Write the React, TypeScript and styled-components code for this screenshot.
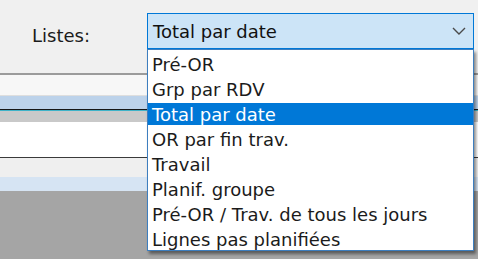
import styled, { createGlobalStyle } from "styled-components"

const GlobalStyle = createGlobalStyle`
  html, body {
    margin: 0;
    padding: 0;
    background: #f0f0f0;
  }
  body {
    font-family: "DejaVu Sans", Tahoma, sans-serif;
  }
`

const Screen = styled.div`
  position: relative;
  width: 478px;
  height: 259px;
  overflow: hidden;
  display: flex;
  flex-direction: column;
  background: #a5a5a5;
`

const Header = styled.div`
  flex: none;
  height: 73px;
  box-sizing: border-box;
  display: flex;
  align-items: flex-start;
  padding: 13px 0 0 32px;
  background: #f0f0f0;
`

const Label = styled.span`
  width: 115px;
  padding-top: 12px;
  font-size: 18px;
  line-height: 21px;
  color: #1b1b1b;
`

const Combo = styled.div`
  width: 327px;
  height: 36px;
  box-sizing: border-box;
  display: flex;
  align-items: center;
  justify-content: space-between;
  padding: 0 7px 0 5px;
  border: 1px solid #0078d7;
  background: #cce4f7;
  font-size: 18px;
  line-height: 21px;
  color: #111;
`

const Stripe = styled.div<{ $h: number; $bg: string }>`
  flex: none;
  height: ${p => p.$h}px;
  background: ${p => p.$bg};
`

const Rest = styled.div`
  flex: 1;
  background: #a5a5a5;
`

const DropList = styled.ul`
  position: absolute;
  top: 49px;
  left: 147px;
  width: 327px;
  box-sizing: border-box;
  margin: 0;
  padding: 3px 0 0;
  list-style: none;
  background: #fff;
  border: 1px solid #3d7ebf;
  box-shadow: 2px 3px 3px rgba(0, 0, 0, 0.45);
`

const Item = styled.li<{ $active?: boolean }>`
  height: 22px;
  box-sizing: border-box;
  padding: 1px 0 0 4px;
  margin-bottom: 3px;
  font-size: 18px;
  line-height: 21px;
  white-space: nowrap;
  color: ${p => (p.$active ? "#fff" : "#1b1b1b")};
  background: ${p => (p.$active ? "#0078d7" : "transparent")};
  &:last-child {
    margin-bottom: 0;
  }
`

const stripes = [
  { h: 2, bg: "#9b9b9b" },
  { h: 20, bg: "#f7f7f7" },
  { h: 1, bg: "#dedede" },
  { h: 13, bg: "#bcd2ea" },
  { h: 1, bg: "#161616" },
  { h: 1, bg: "#3fb3c8" },
  { h: 11, bg: "#c9c9c9" },
  { h: 35, bg: "#ffffff" },
  { h: 1, bg: "#3a3a3a" },
  { h: 19, bg: "#efefef" },
  { h: 14, bg: "#d6e4f3" },
]

const options = [
  "Pré-OR",
  "Grp par RDV",
  "Total par date",
  "OR par fin trav.",
  "Travail",
  "Planif. groupe",
  "Pré-OR / Trav. de tous les jours",
  "Lignes pas planifiées",
]

const Chevron = () => (
  <svg width="14" height="8" viewBox="0 0 14 8">
    <polyline points="1,1 7,7 13,1" fill="none" stroke="#4a4a4a" strokeWidth="1.4" />
  </svg>
)

export default function App() {
  const selected = "Total par date"
  return (
    <>
      <GlobalStyle />
      <Screen>
        <Header>
          <Label>Listes:</Label>
          <Combo>
            <span>{selected}</span>
            <Chevron />
          </Combo>
        </Header>
        {stripes.map((s, i) => (
          <Stripe key={i} $h={s.h} $bg={s.bg} />
        ))}
        <Rest />
        <DropList>
          {options.map(o => (
            <Item key={o} $active={o === selected}>
              {o}
            </Item>
          ))}
        </DropList>
      </Screen>
    </>
  )
}
